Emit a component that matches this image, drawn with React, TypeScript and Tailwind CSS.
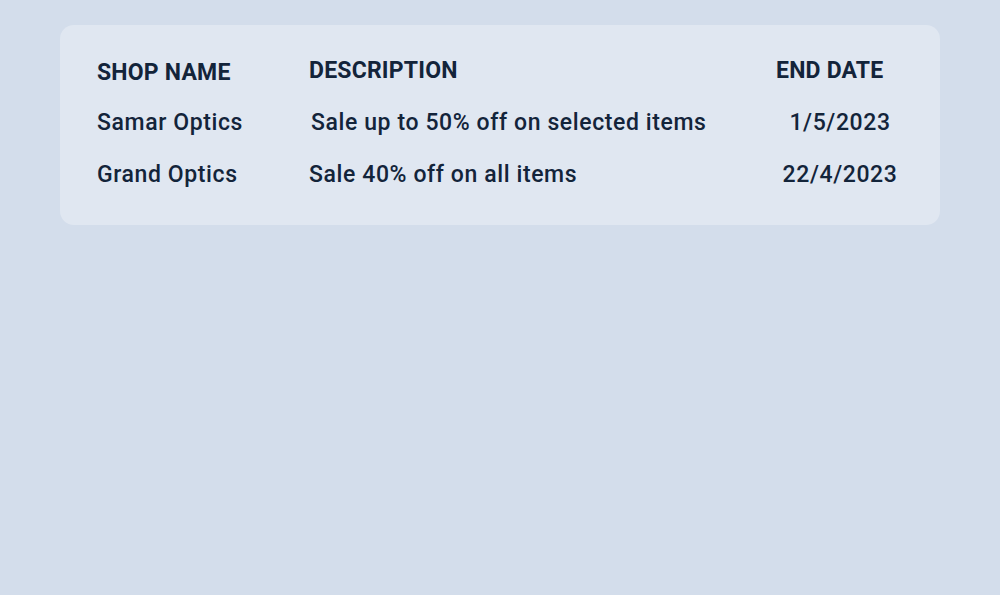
import React from 'react';

interface Offer {
  shop: string;
  description: string;
  endDate: string;
}

const offers: Offer[] = [
  { shop: 'Samar Optics', description: 'Sale up to 50% off on selected items', endDate: '1/5/2023' },
  { shop: 'Grand Optics', description: 'Sale 40% off on all items', endDate: '22/4/2023' },
];

const App: React.FC = () => {
  return (
    <div
      className="min-h-[595px] w-full bg-[#d3ddeb] px-[60px] pt-[25px] text-[#13243a]"
      style={{ fontFamily: 'Roboto, "Liberation Sans", sans-serif' }}
    >
      <div className="rounded-[14px] bg-[#e0e7f1] pl-[37px] pr-[30px] pt-[20px] pb-[24px]">
        <div className="grid grid-cols-[212px_1fr_140px] items-center">
          <div className="text-[23px] font-bold tracking-[0.2px] h-[52px] flex items-center pt-[4px]">SHOP NAME</div>
          <div className="text-[23px] font-bold tracking-[0.2px] h-[52px] flex items-center">DESCRIPTION</div>
          <div className="text-[23px] font-bold tracking-[0.2px] h-[52px] flex items-center pl-[6px]">END DATE</div>
          {offers.map((o, i) => (
            <React.Fragment key={o.shop}>
              <div className="text-[23px] font-medium tracking-[0.6px] h-[52px] flex items-center">{o.shop}</div>
              <div className={`text-[23px] font-medium tracking-[0.6px] h-[52px] flex items-center ${i === 0 ? 'pl-[2px]' : ''}`}>
                {o.description}
              </div>
              <div className="text-[23px] font-medium tracking-[0.6px] h-[52px] flex items-center justify-center">{o.endDate}</div>
            </React.Fragment>
          ))}
        </div>
      </div>
    </div>
  );
};

export default App;
